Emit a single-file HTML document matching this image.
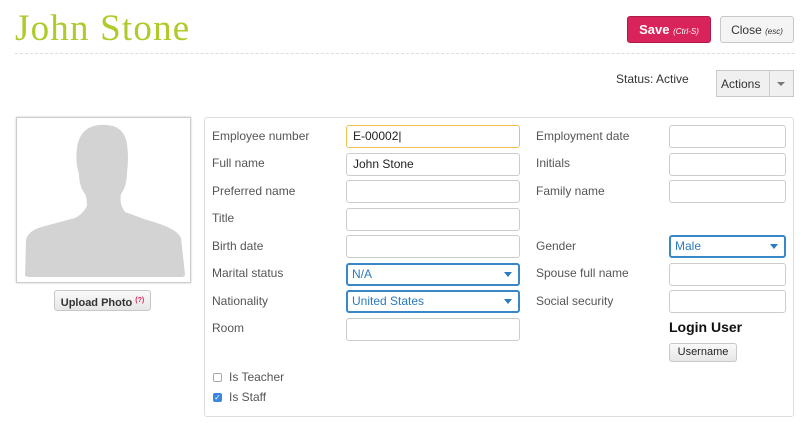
<!DOCTYPE html>
<html><head><meta charset="utf-8"><style>
*{box-sizing:border-box;margin:0;padding:0}
body{width:809px;height:423px;background:#fff;font-family:"Liberation Sans",sans-serif;font-size:12px;color:#444;position:relative;overflow:hidden}
.a{position:absolute}
h1{position:absolute;left:15px;top:7px;font-family:"Liberation Serif",serif;font-weight:normal;font-size:37px;color:#aecb2a;letter-spacing:1.2px}
.dots{left:15px;top:53px;width:780px;border-top:1px dashed #ddd}
.btn{position:absolute;border:1px solid #c8c8c8;border-radius:3px;background:linear-gradient(#fafafa,#e6e6e6);color:#333;font-weight:bold;text-align:center}
.save{left:627px;top:16px;width:84px;height:27px;background:#d8245a;border-color:#b01a48;color:#fff;font-size:13px;line-height:26px}
.close{left:720px;top:16px;width:74px;height:27px;font-size:12px;line-height:26px;background:#f4f4f4;font-weight:normal}
small{font-size:8px;font-style:italic;font-weight:normal}
.lbl{position:absolute;font-size:12px;color:#555}
.in{position:absolute;height:23px;border:1px solid #ccc;border-radius:3px;background:#fff;font-size:12px;color:#222;padding-left:6px;line-height:21px}
.sel{border:2px solid #3a87c8;color:#2a7bc0;line-height:19px;padding-left:4px}
.sel:after{content:"";position:absolute;right:6px;top:7px;border:4px solid transparent;border-top:5px solid #2a7bc0}
.panel{left:204px;top:117px;width:590px;height:300px;border:1px solid #ddd;border-radius:3px}
.photo{left:16px;top:117px;width:175px;height:166px;border:1px solid #ccc;box-shadow:0 0 2px #ccc}
.cb{position:absolute;width:9px;height:9px;border:1px solid #aaa;border-radius:2px;left:213px}
</style></head><body>
<h1>John Stone</h1>
<div class="a dots"></div>
<div class="btn save">Save <small>(Ctrl-S)</small></div>
<div class="btn close">Close <small>(esc)</small></div>
<div class="lbl" style="left:616px;top:72px;color:#333">Status: Active</div>
<div class="btn" style="left:716px;top:70px;width:78px;height:27px;border-radius:0;font-weight:normal;font-size:12px;line-height:26px;text-align:left;padding-left:4px;background:#f0f0f0">Actions<span style="position:absolute;left:52px;top:0;height:25px;border-left:1px solid #ccc"></span><span style="position:absolute;left:60px;top:11px;border:4px solid transparent;border-top:4px solid #777"></span></div>
<div class="a photo"><svg width="173" height="164" viewBox="0 0 173 164"><path fill="#d3d3d3" d="M8 158 L9 122 Q11 112 28 108 L58 100 Q66 96 70 88 Q70 80 68 76 Q62 68 62 56 Q58 44 60 30 Q62 14 74 9 Q84 5 96 8 Q108 12 110 26 Q112 40 110 54 Q110 68 104 76 Q102 86 108 94 L130 102 Q160 110 164 120 L168 156 Q168 159 164 159 L12 159 Z"/></svg></div>
<div class="btn" style="left:54px;top:290px;width:97px;height:21px;font-size:11px;line-height:19px">Upload Photo <span style="color:#d8245a;font-size:7px;vertical-align:4px">(?)</span></div>
<div class="a panel"></div>
<div class="lbl" style="left:212px;top:129px">Employee number</div>
<div class="in" style="left:346px;top:125px;width:174px;border-color:#f0c050">E-00002|</div>
<div class="lbl" style="left:212px;top:156px">Full name</div>
<div class="in" style="left:346px;top:153px;width:174px">John Stone</div>
<div class="lbl" style="left:212px;top:184px">Preferred name</div>
<div class="in" style="left:346px;top:180px;width:174px"></div>
<div class="lbl" style="left:212px;top:239px">Title</div>
<div class="lbl" style="left:212px;top:211px">Title</div>
<div class="in" style="left:346px;top:208px;width:174px"></div>
<div class="lbl" style="left:212px;top:239px;background:#fff;width:100px">Birth date</div>
<div class="in" style="left:346px;top:235px;width:174px"></div>
<div class="lbl" style="left:212px;top:266px">Marital status</div>
<div class="in sel" style="left:346px;top:263px;width:174px">N/A</div>
<div class="lbl" style="left:212px;top:294px">Nationality</div>
<div class="in sel" style="left:346px;top:290px;width:174px">United States</div>
<div class="lbl" style="left:212px;top:321px">Room</div>
<div class="in" style="left:346px;top:318px;width:174px"></div>
<div class="cb" style="top:373px"></div><div class="lbl" style="left:229px;top:370px">Is Teacher</div>
<div class="cb" style="top:393px;background:#3a87e0;border-color:#3a87e0;color:#fff;font-size:8px;line-height:8px;text-align:center">✓</div><div class="lbl" style="left:229px;top:390px">Is Staff</div>
<div class="lbl" style="left:536px;top:129px">Employment date</div>
<div class="in" style="left:669px;top:125px;width:117px"></div>
<div class="lbl" style="left:536px;top:156px">Initials</div>
<div class="in" style="left:669px;top:153px;width:117px"></div>
<div class="lbl" style="left:536px;top:184px">Family name</div>
<div class="in" style="left:669px;top:180px;width:117px"></div>
<div class="lbl" style="left:536px;top:239px">Gender</div>
<div class="in sel" style="left:669px;top:235px;width:117px">Male</div>
<div class="lbl" style="left:536px;top:266px">Spouse full name</div>
<div class="in" style="left:669px;top:263px;width:117px"></div>
<div class="lbl" style="left:536px;top:294px">Social security</div>
<div class="in" style="left:669px;top:290px;width:117px"></div>
<div class="lbl" style="left:669px;top:319px;font-size:14px;font-weight:bold;color:#111">Login User</div>
<div class="btn" style="left:669px;top:343px;width:68px;height:19px;font-size:11px;line-height:17px;font-weight:normal;color:#222">Username</div>
</body></html>
